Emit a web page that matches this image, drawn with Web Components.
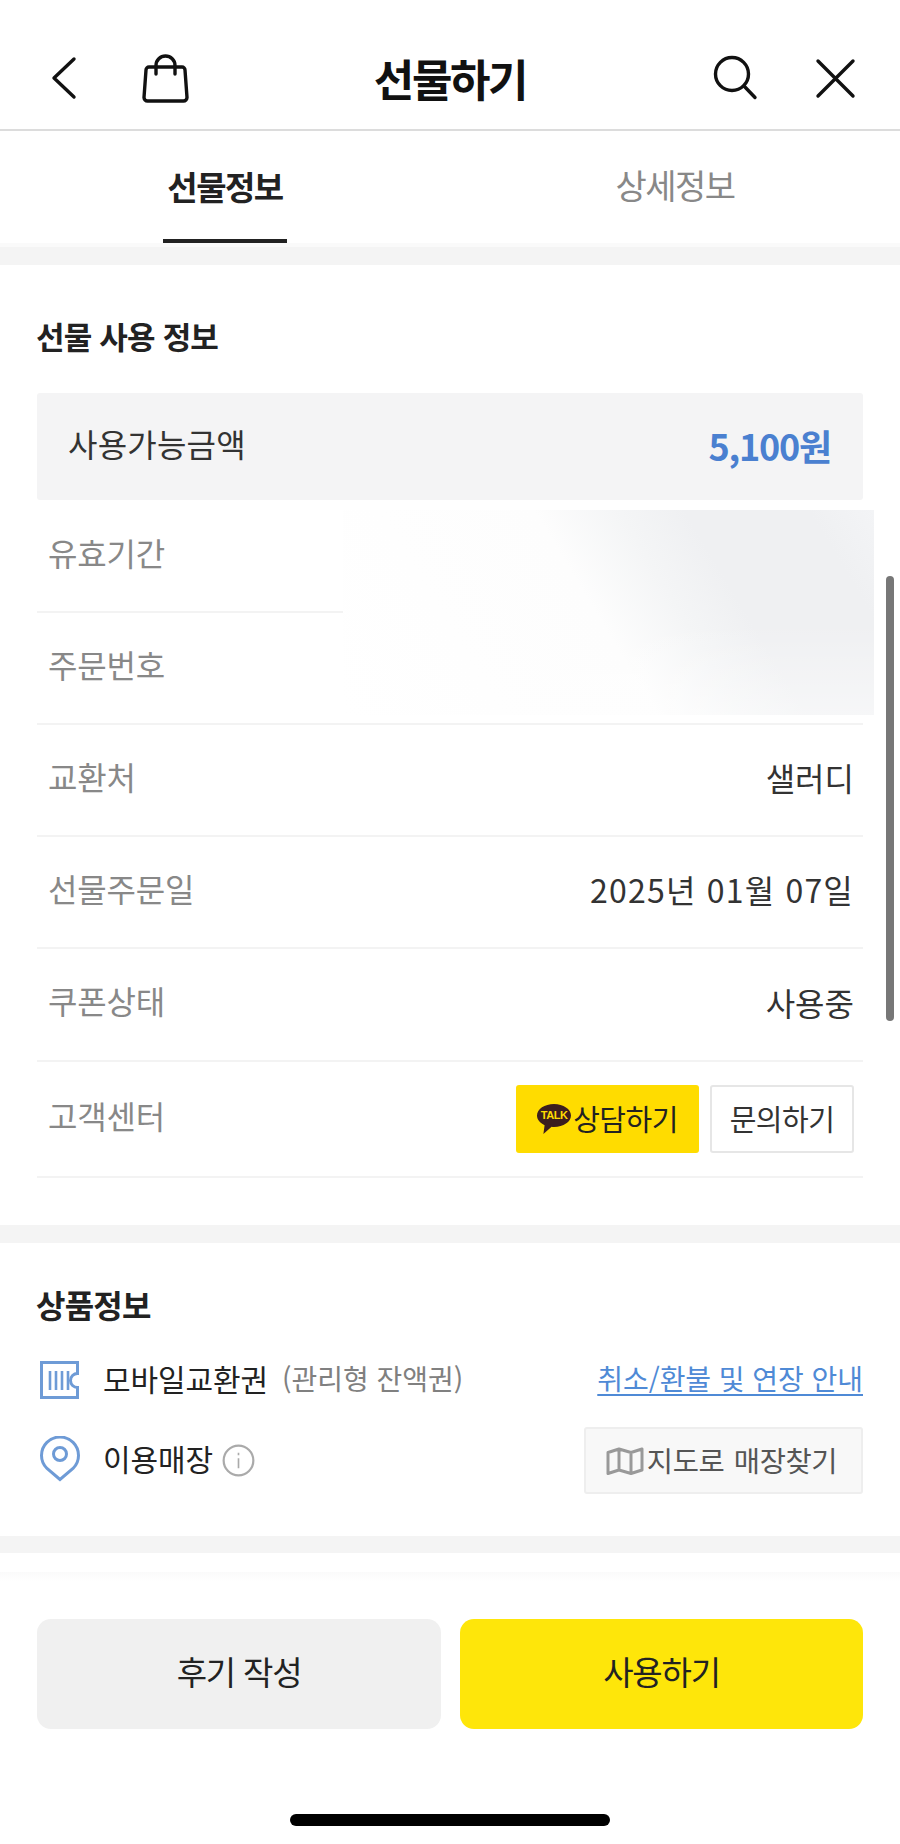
<!DOCTYPE html>
<html lang="ko"><head><meta charset="utf-8"><title>선물하기</title>
<style>
html,body{margin:0;padding:0;background:#fff}
body{width:900px;height:1844px;overflow:hidden;position:relative;font-family:"Noto Sans CJK KR","Noto Sans",sans-serif;color:#222}
</style></head><body>
<gift-page></gift-page>
<script>
const F='"Noto Sans CJK KR","Noto Sans",sans-serif';
function el(name,html){customElements.define(name,class extends HTMLElement{constructor(){super();this.attachShadow({mode:'open'}).innerHTML=html;}});}

el('top-bar',`<style>
:host{display:flex;align-items:center;justify-content:center;position:relative;height:129px;border-bottom:2px solid #dcdcdc;box-sizing:content-box;font-family:${F}}
.t{font-size:44px;font-weight:700;letter-spacing:-2.4px;color:#111;line-height:48px;margin-top:26px}
svg{position:absolute;left:0;top:0;width:900px;height:129px;fill:none;stroke:#111;stroke-width:3.4;stroke-linecap:round;stroke-linejoin:round}
</style>
<svg viewBox="0 0 900 129" aria-hidden="true">
<path d="M74 59 54 78 74 97"/>
<path d="M149 67h33a3 3 0 0 1 3 3l2 27.500a3.500 3.500 0 0 1-3.500 3.500h-36a3.500 3.500 0 0 1-3.500-3.500l2-27.500a3 3 0 0 1 3-3Z"/>
<path d="M156 74V65.500a9.500 9.500 0 0 1 19 0V74"/>
<circle cx="732" cy="74" r="16.500"/><path d="M744 86l11 11.500"/>
<path d="M818 61l35 35M853 61l-35 35"/>
</svg>
<div class="t">선물하기</div>`);

el('tab-bar',`<style>
:host{display:grid;grid-template-columns:450px 450px;height:112px;font-family:${F}}
.a,.b{display:flex;justify-content:center;align-items:center;height:112px;box-sizing:border-box;letter-spacing:-1.5px;line-height:40px}
.a{font-size:33px;font-weight:700;color:#222}
.a span{display:flex;align-items:center;height:112px;padding:2px 4px 0;box-sizing:border-box;border-bottom:4px solid #222}
.b{color:#888;font-size:34px;padding-bottom:4px}
</style><div class="a"><span>선물정보</span></div><div class="b">상세정보</div>`);

el('gray-band',`<style>:host{display:block;height:var(--h,18px);background:#f4f4f4}</style>`);

el('info-section',`<style>
:host{display:block;padding:var(--pt,51px) 37px var(--pb,47px);font-family:${F}}
h2{margin:0 0 var(--hm,37px);font-size:var(--hs,31px);font-weight:700;line-height:40px;letter-spacing:var(--hl,-.8px);color:#222;margin-left:-1px}
</style><h2><slot name="title"></slot></h2><slot></slot>`);

el('amount-box',`<style>
:host{display:flex;justify-content:space-between;align-items:center;height:107px;margin-bottom:1px;padding:0 32px 0 31px;background:#f4f4f5;border-radius:3px;font-size:32px;letter-spacing:.2px;color:#333;font-family:${F}}
b{color:#4a80d0;font-size:36px;letter-spacing:-1.2px;font-weight:700;margin-bottom:4px}
div{margin-bottom:7px}
</style><div><slot name="label"></slot></div><b><slot name="value"></slot></b>`);

el('info-row',`<style>
:host{display:flex;justify-content:space-between;align-items:center;height:112px;box-sizing:border-box;padding:0 9px 0 11px;border-bottom:2px solid #f3f3f3;font-size:32px;letter-spacing:-.2px;font-family:${F}}
.l{color:#888;margin-bottom:9px}.v{color:#333;display:flex;gap:11px;align-items:center}
:host([txt]) .v{margin-bottom:6px;letter-spacing:0}
:host([wide]) .v{letter-spacing:1.2px}
</style><div class="l"><slot name="label"></slot></div><div class="v"><slot></slot></div>`);

el('talk-button',`<style>
:host{display:flex;align-items:center;justify-content:center;gap:2px;width:183px;height:68px;box-sizing:border-box;padding-bottom:3px;margin-left:-1px;border-radius:3px;background:#ffdc00;font-size:29px;letter-spacing:-.5px;color:#222;font-family:${F}}
.i{position:relative;width:34px;height:30px;margin-top:2px}
svg{position:absolute;inset:0;width:34px;height:30px}
.i span{position:absolute;left:0;right:0;top:4.500px;text-align:center;font:700 11px/14px "Liberation Sans",sans-serif;letter-spacing:-.4px;color:#ffdc00}
</style><div class="i"><svg viewBox="0 0 34 30" aria-hidden="true"><path fill="#3c1e1e" d="M17 0C7.600 0 0 5.100 0 11.500c0 4.100 3 7.600 7.600 9.700L6.400 30l8.200-7.200c.8.100 1.600.2 2.400.2 9.400 0 17-5.200 17-11.500S26.400 0 17 0Z"/></svg><span>TALK</span></div><slot></slot>`);

el('ask-button',`<style>
:host{display:flex;align-items:center;justify-content:center;width:144px;height:68px;box-sizing:border-box;padding-bottom:3px;border:2px solid #e6e6e6;border-radius:3px;background:#fff;font-size:29px;letter-spacing:-.5px;color:#333;font-family:${F}}
</style><slot></slot>`);

el('product-row',`<style>
:host{display:flex;align-items:center;height:var(--h,48px);margin-top:var(--m,0);font-family:${F}}
.ic{width:42px;height:46px;margin:0 21px var(--ib,0) 3px;flex:none;display:flex}
.t{font-size:30px;letter-spacing:-.1px;color:#222}
.x{flex:1;display:flex;align-items:center;min-width:0;margin-bottom:5px}
</style><div class="ic"><slot name="icon"></slot></div><div class="x"><span class="t"><slot name="text"></slot></span><slot name="after"></slot></div><slot name="end"></slot>`);

el('map-button',`<style>
:host{display:flex;align-items:center;justify-content:center;gap:3px;width:279px;height:67px;box-sizing:border-box;border:2px solid #eee;border-radius:3px;background:#f8f8f8;font-size:28.500px;letter-spacing:-.4px;word-spacing:2px;color:#555;font-family:${F}}
span{margin-bottom:3px}
svg{width:38px;height:28px;fill:none;stroke:#999;stroke-width:3;stroke-linejoin:round;margin-left:-4px}
</style><svg viewBox="0 0 38 28" aria-hidden="true"><path d="M2 5.500 13 2l12 3.500L36 2v21l-11 3.500L13 23 2 26.500ZM13 2v21M25 5.500v21"/></svg><span><slot></slot></span>`);

el('bottom-bar',`<style>
:host{display:block;height:272px;margin-top:19px;background:linear-gradient(#fafafa,#fff 10px);padding:47px 37px 0;box-sizing:border-box;font-family:${F}}
.g{display:grid;grid-template-columns:404px 403px;gap:19px}
.g div{height:110px;box-sizing:border-box;padding-bottom:6px;border-radius:14px;display:flex;align-items:center;justify-content:center;font-size:33px;letter-spacing:-1.2px;color:#222}
.a{background:#f0f0f0}.b{background:#fee60a}
.h{width:320px;height:12px;border-radius:6px;background:#000;margin:85px auto 0}
</style><div class="g"><div class="a">후기 작성</div><div class="b">사용하기</div></div><div class="h"></div>`);

el('blur-patch',`<style>:host{position:absolute;left:343px;top:510px;width:531px;height:205px;background:
linear-gradient(180deg,rgba(255,255,255,0) 55%,rgba(255,255,255,.45) 100%),
linear-gradient(59deg,#fff 0,#fdfdfd 48%,#f4f5f6 61%,#eff0f2 71%,#eff0f2 90%,#f3f4f6 100%)}</style>`);

el('scroll-thumb',`<style>:host{position:absolute;left:886px;top:576px;width:8px;height:445px;border-radius:4px;background:#777}</style>`);

el('gift-page',`<style>:host{display:block;width:900px;height:1844px;overflow:hidden;position:relative;font-family:${F}}
svg{display:block}
.gr{font-size:28px;color:#808080;margin-left:14px}
.lnk{font-size:28px;letter-spacing:-.05px;color:#4f8ad6;text-decoration:underline;text-underline-offset:4px;margin-bottom:5px}
.inf{width:33px;height:33px;margin-left:9px;margin-top:5px}
</style>
<top-bar></top-bar><tab-bar></tab-bar>
<div style="height:4px;background:#fafafa"></div>
<gray-band></gray-band>
<info-section>
<span slot="title">선물 사용 정보</span>
<amount-box><span slot="label">사용가능금액</span><span slot="value">5,100원</span></amount-box>
<info-row><span slot="label">유효기간</span></info-row>
<info-row><span slot="label">주문번호</span></info-row>
<info-row txt><span slot="label">교환처</span>샐러디</info-row>
<info-row txt wide><span slot="label">선물주문일</span>2025년 01월 07일</info-row>
<info-row txt style="height:113px"><span slot="label">쿠폰상태</span>사용중</info-row>
<info-row style="height:116px"><span slot="label">고객센터</span><talk-button>상담하기</talk-button><ask-button>문의하기</ask-button></info-row>
</info-section>
<gray-band></gray-band>
<info-section style="--pt:41px;--pb:42px;--hm:32px;--hs:32px;--hl:-.8px">
<span slot="title">상품정보</span>
<product-row>
<svg slot="icon" width="42" height="46" viewBox="0 0 42 46" fill="none" stroke="#6e9bd6" stroke-width="3"><path d="M1.500 5.500h36v11a7 7 0 0 0 0 14v10h-36Z"/><path d="M10 14v19M16 14v19M22 14v19M28 14v19" stroke-width="2.600"/></svg>
<span slot="text">모바일교환권</span><span slot="after" class="gr">(관리형 잔액권)</span>
<span slot="end" class="lnk">취소/환불 및 연장 안내</span>
</product-row>
<product-row style="--h:67px;--m:23px;--ib:4px">
<svg slot="icon" width="42" height="46" viewBox="0 0 42 46" fill="none" stroke="#6e9bd6" stroke-width="3"><path d="M20 44.500 7 33.500C3.500 30 1.500 26 1.500 20.500a18.500 18.500 0 0 1 37 0c0 5.500-2 9.500-5.500 13Z" transform="translate(0 -1)"/><circle cx="20" cy="18" r="6.500"/></svg>
<span slot="text">이용매장</span>
<svg slot="after" class="inf" viewBox="0 0 30 30" fill="none" stroke="#aaa" stroke-width="2"><circle cx="15" cy="15" r="13.500"/><path d="M15 13v9M15 8v2.200" stroke-width="1.500"/></svg>
<map-button slot="end">지도로 매장찾기</map-button>
</product-row>
</info-section>
<gray-band style="--h:17px"></gray-band>
<bottom-bar></bottom-bar>
<blur-patch></blur-patch><scroll-thumb></scroll-thumb>`);
</script>
</body></html>
